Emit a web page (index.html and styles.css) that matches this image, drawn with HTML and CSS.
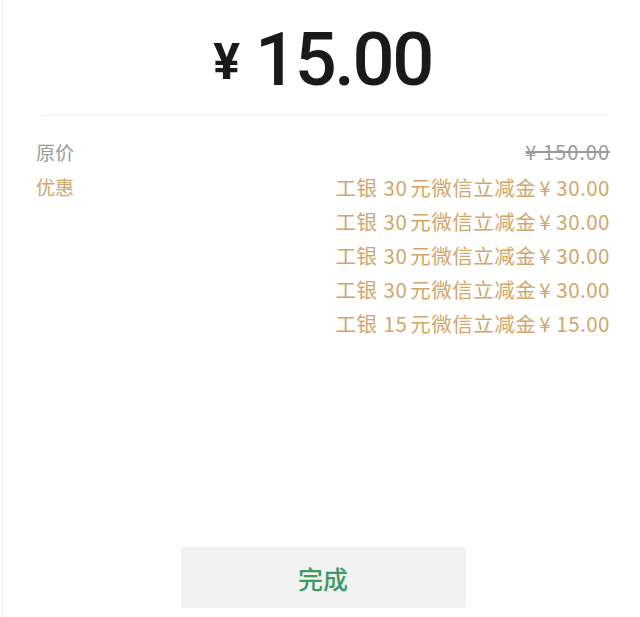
FILE: index.html
```html
<!DOCTYPE html>
<html lang="zh-CN">
<head>
<meta charset="utf-8">
<link rel="stylesheet" href="styles.css">
</head>
<body>
<div class="page">
  <div class="amount"><span class="yen">¥</span><span class="num">15.00</span></div>
  <div class="divider"></div>
  <div class="details">
    <div class="row">
      <span class="label gray">原价</span>
      <span class="values"><span class="value gray strike">¥ 150.00</span></span>
    </div>
    <div class="row">
      <span class="label orange">优惠</span>
      <span class="values">
        <span class="value orange">工银<span class="d">30</span>元微信立减金<span class="y">¥</span> 30.00</span>
        <span class="value orange">工银<span class="d">30</span>元微信立减金<span class="y">¥</span> 30.00</span>
        <span class="value orange">工银<span class="d">30</span>元微信立减金<span class="y">¥</span> 30.00</span>
        <span class="value orange">工银<span class="d">30</span>元微信立减金<span class="y">¥</span> 30.00</span>
        <span class="value orange">工银<span class="d">15</span>元微信立减金<span class="y">¥</span> 15.00</span>
      </span>
    </div>
  </div>
  <div class="spacer"></div>
  <div class="footer">
    <button class="done">完成</button>
  </div>
</div>
</body>
</html>
```

FILE: styles.css
```css
html, body {
  margin: 0;
  padding: 0;
  background: #ffffff;
}
.page {
  width: 640px;
  height: 617px;
  box-sizing: border-box;
  border-left: 1px solid #efefef;
  margin-left: 2px;
  display: flex;
  flex-direction: column;
  font-family: "Noto Sans CJK SC", "Noto Sans", sans-serif;
}
.amount {
  display: flex;
  justify-content: center;
  align-items: baseline;
  padding-top: 17px;
  height: 83px;
  color: #1a1a1a;
  font-family: Roboto, "Noto Sans", sans-serif;
}
.yen {
  font-size: 50px;
  font-weight: 700;
  margin-right: 15px;
  margin-left: 0;
  position: relative;
  top: -6px;
}
.num {
  font-size: 74px;
  font-weight: 500;
  line-height: 86px;
  letter-spacing: -2.4px;
}
.divider {
  height: 1px;
  background: #f2f2f2;
  margin: 15px 33px 0 38px;
}
.details {
  padding: 19px 32px 0 33px;
  display: flex;
  flex-direction: column;
  gap: 1px;
}
.row {
  display: flex;
  justify-content: space-between;
  align-items: flex-start;
}
.label, .value {
  font-size: 19px;
  line-height: 34px;
}
.values {
  display: flex;
  flex-direction: column;
  align-items: flex-end;
}
.value {
  font-size: 20.5px;
  letter-spacing: 0.5px;
}
.d {
  margin: 0 3px 0 6px;
}
.y {
  margin-left: 3px;
}
.strike {
  font-size: 20px;
  letter-spacing: 1px;
}
.gray { color: #9a9a9a; }
.orange { color: #d1a66a; }
.strike { text-decoration: line-through; }
.spacer { flex: 1; }
.footer {
  display: flex;
  justify-content: center;
  padding-bottom: 9px;
}
.done {
  width: 285px;
  height: 61px;
  border: none;
  border-radius: 3px;
  background: #f2f2f2;
  color: #3d9a63;
  font-family: "Noto Sans CJK SC", sans-serif;
  font-size: 25px;
  font-weight: 500;
  margin-left: 1px;
}
```
